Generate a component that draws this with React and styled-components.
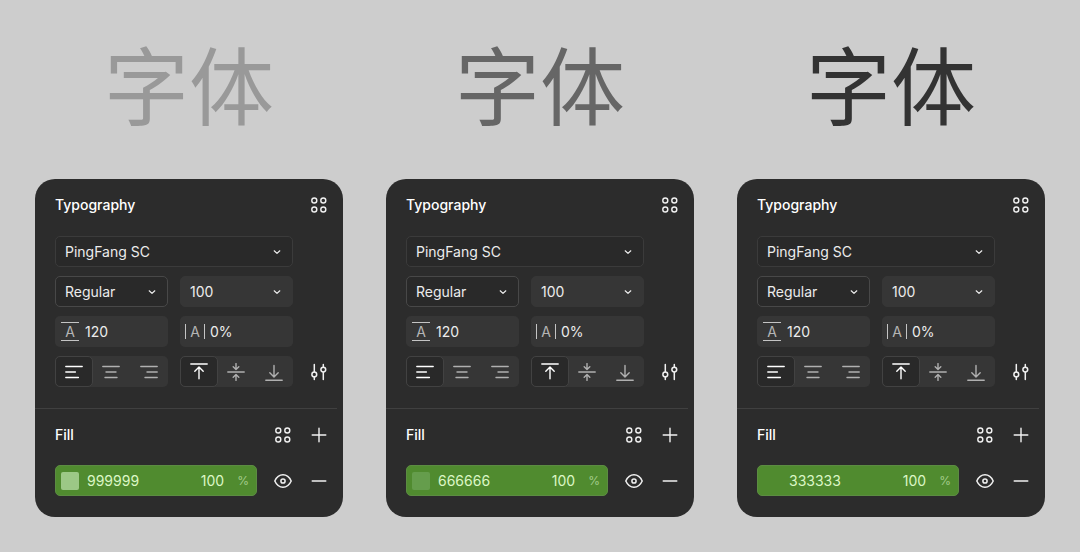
import React, { useId, useState } from 'react';
import styled, { createGlobalStyle } from 'styled-components';

const GlobalStyle = createGlobalStyle`
    * {
        box-sizing: border-box;
    }

    body {
        margin: 0;
        background-color: #cdcdcd;
        font-family: Inter, "Noto Sans CJK SC", sans-serif;
        font-size: 14px;
        color: #f1f1f1;
    }
`;

const Page = styled.main`
    display: grid;
    grid-template-columns: repeat(auto-fit, minmax(300px, 1fr));
    gap: 43px;
    padding: 39px 35px 35px;
`;

const Specimen = styled.h1`
    margin: 0 0 55px;
    font-family: "Noto Sans CJK SC", sans-serif;
    font-size: 85px;
    font-weight: 400;
    line-height: 85px;
    text-align: center;
    color: ${({ $color }) => $color};
`;

const Panel = styled.section`
    background-color: #2c2c2c;
    border-radius: 20px;
`;

const Section = styled.div`
    padding: 0 15px 21px 20px;
`;

const Divider = styled.hr`
    height: 1px;
    margin: 0 6px 0 0;
    border: 0;
    background-color: #404040;
`;

const SectionHeader = styled.header`
    display: flex;
    align-items: center;
    gap: 18px;
    height: 52px;
    margin-bottom: ${({ $gap }) => $gap}px;
`;

const Title = styled.h2`
    flex: 1;
    margin: 0;
    padding-bottom: 2px;
    font-size: 14px;
    font-weight: 500;
    color: #fff;
`;

const IconButton = styled.button`
    display: flex;
    flex: none;
    width: 18px;
    height: 18px;
    padding: 0;
    border: 0;
    background: none;
    color: #f1f1f1;
    cursor: pointer;
`;

const Rows = styled.div`
    display: grid;
    gap: 9px;
`;

const Row = styled.div`
    display: flex;
    align-items: center;
    gap: 17px;
    min-width: 0;
`;

const Actions = styled.div`
    display: flex;
    flex: none;
    gap: 18px;
`;

const Spacer = styled.span`
    flex: none;
    width: 18px;
`;

const Fields = styled.div`
    display: grid;
    flex: 1;
    grid-template-columns: repeat(${({ $single }) => ($single ? 1 : 2)}, minmax(0, 1fr));
    gap: 12px;
    min-width: 0;
`;

const SelectBox = styled.label`
    display: grid;
    grid-template-columns: minmax(0, 1fr) 19px;
    grid-template-rows: 100%;
    align-items: center;
    height: 31px;
    border: 1px solid ${({ $filled, $faint }) => ($filled ? '#363636' : $faint ? '#3b3b3b' : '#484848')};
    border-radius: 5px;
    background-color: ${({ $filled }) => ($filled ? '#363636' : '#292929')};

    svg {
        grid-area: 1 / 2;
        pointer-events: none;
    }
`;

const Select = styled.select`
    grid-area: 1 / 1 / 2 / 3;
    width: 100%;
    height: 100%;
    padding: 0 20px 1px 9px;
    border: 0;
    appearance: none;
    background: none;
    color: #ececec;
    font: inherit;
`;

const Field = styled.label`
    display: flex;
    align-items: center;
    gap: 5px;
    height: 31px;
    padding: 0 5px;
    border-radius: 5px;
    background-color: #363636;
`;

const FieldInput = styled.input`
    flex: 1;
    min-width: 0;
    padding: 0;
    border: 0;
    background: none;
    color: #ececec;
    font: inherit;
`;

const MetricGlyph = styled.span`
    display: flex;
    flex: none;
    align-items: center;
    justify-content: center;
    width: ${({ $vertical }) => ($vertical ? 18 : 20)}px;
    height: ${({ $vertical }) => ($vertical ? 19 : 15)}px;
    margin: 0 ${({ $vertical }) => ($vertical ? 1 : 0)}px;
    border: 0 solid #c4c4c4;
    border-width: ${({ $vertical }) => ($vertical ? '1px 0' : '0 1px')};
    font-size: 14px;
    line-height: 14px;
    color: #b4b4b4;
`;

const Segmented = styled.div`
    display: grid;
    grid-template-columns: repeat(3, 1fr);
    height: 31px;
    border-radius: 5px;
    background-color: #363636;
`;

const Segment = styled.button`
    display: flex;
    align-items: center;
    justify-content: center;
    padding: 0;
    border: 1px solid ${({ $active }) => ($active ? '#424242' : 'transparent')};
    border-radius: 5px;
    background-color: ${({ $active }) => ($active ? '#292929' : 'transparent')};
    color: ${({ $active }) => ($active ? '#fff' : '#b0b0b0')};
    cursor: pointer;
`;

const FillBar = styled.div`
    display: flex;
    flex: 1;
    align-items: center;
    min-width: 0;
    height: 31px;
    padding: 0 7px 0 5px;
    border: 1px solid #5c8c42;
    border-radius: 5px;
    background-color: #508b2f;
`;

const Swatch = styled.span`
    flex: none;
    width: 18px;
    height: 18px;
    margin-right: 8px;
    border-radius: 2px;
    background-color: ${({ $color }) => $color};
`;

const FillInput = styled.input`
    flex: ${({ $fixed }) => ($fixed ? 'none' : 1)};
    width: ${({ $fixed }) => ($fixed ? '32px' : 'auto')};
    min-width: 0;
    padding: 0;
    border: 0;
    background: none;
    color: #dcf7c6;
    font: inherit;
    text-align: ${({ $fixed }) => ($fixed ? 'right' : 'left')};
`;

const Percent = styled.span`
    margin-left: 13px;
    font-size: 12px;
    color: #a3cb8a;
`;

const Icon = ({ size = 18, width = 1.4, children }) => (
    <svg
        width={size}
        height={size}
        viewBox={`0 0 ${size} ${size}`}
        fill="none"
        stroke="currentColor"
        strokeWidth={width}
        strokeLinecap="round"
        strokeLinejoin="round"
        aria-hidden="true"
    >
        {children}
    </svg>
);

const StylesIcon = () => (
    <Icon width={1.4}>
        <circle cx="4.3" cy="4.5" r="2.5" />
        <circle cx="13.3" cy="4.5" r="2.5" />
        <circle cx="4.3" cy="13.5" r="2.5" />
        <circle cx="13.3" cy="13.5" r="2.5" />
    </Icon>
);

const ChevronIcon = () => (
    <Icon size={8} width={1.2}>
        <path d="M1.2 2.8 4 5.4 6.8 2.8" />
    </Icon>
);

const SlidersIcon = () => (
    <Icon width={1.5}>
        <path d="M4.3 1.5v7.2M4.3 14v2.5M13.3 1.5V4M13.3 9.3v7.2" />
        <circle cx="4.3" cy="11.4" r="2.4" />
        <circle cx="13.3" cy="6.6" r="2.4" />
    </Icon>
);

const PlusIcon = () => (
    <Icon>
        <path d="M2.2 9h13.6M9 2.2v13.6" />
    </Icon>
);

const MinusIcon = () => (
    <Icon>
        <path d="M2.2 9h13.6" />
    </Icon>
);

const EyeIcon = () => (
    <Icon width={1.5}>
        <path d="M.8 9C2.6 5 5.5 2.8 9 2.8S15.4 5 17.2 9c-1.8 4-4.7 6.2-8.2 6.2S2.6 13 .8 9z" />
        <circle cx="9" cy="9" r="2.1" />
    </Icon>
);

const horizontal = [
    { label: 'Align left', path: 'M.8 3.5h16.4M.8 9h9.6M.8 14.5h12.6' },
    { label: 'Align center', path: 'M.8 3.5h16.4M4 9h10M3 14.5h12' },
    { label: 'Align right', path: 'M.8 3.5h16.4M7 9h10.2M5 14.5h12.2' },
];

const vertical = [
    { label: 'Align top', path: 'M.8 1h16.4M9 15.8V4.2M4.8 8.2 9 4l4.2 4.2' },
    { label: 'Align middle', path: 'M.8 9h16.4M9 .6v5.6M6.2 3.8 9 6.4l2.8-2.6M9 17.4v-5.6M6.2 14.2 9 11.6l2.8 2.6' },
    { label: 'Align bottom', path: 'M.8 17.2h16.4M9 2.4v11.2M4.8 9.8 9 14l4.2-4.2' },
];

const AlignGroup = ({ label, options }) => {
    const [active, setActive] = useState(0);

    return (
        <Segmented role="group" aria-label={label}>
            {options.map((option, index) => (
                <Segment
                    key={option.label}
                    type="button"
                    aria-label={option.label}
                    aria-pressed={index === active}
                    $active={index === active}
                    onClick={() => setActive(index)}
                >
                    <Icon>
                        <path d={option.path} />
                    </Icon>
                </Segment>
            ))}
        </Segmented>
    );
};

const Dropdown = ({ label, value, filled, faint }) => {
    const id = useId();

    return (
        <SelectBox htmlFor={id} $filled={filled} $faint={faint}>
            <Select id={id} aria-label={label} defaultValue={value}>
                <option>{value}</option>
            </Select>
            <ChevronIcon />
        </SelectBox>
    );
};

const Metric = ({ label, value, tall }) => {
    const id = useId();

    return (
        <Field htmlFor={id}>
            <MetricGlyph $vertical={tall} aria-hidden="true">A</MetricGlyph>
            <FieldInput id={id} aria-label={label} defaultValue={value} />
        </Field>
    );
};

const TypePanel = ({ hex, swatch }) => (
    <Panel>
        <Section>
            <SectionHeader $gap={5}>
                <Title>Typography</Title>
                <IconButton type="button" aria-label="Text styles">
                    <StylesIcon />
                </IconButton>
            </SectionHeader>
            <Rows>
                <Row>
                    <Fields $single>
                        <Dropdown label="Font family" value="PingFang SC" faint />
                    </Fields>
                    <Spacer />
                </Row>
                <Row>
                    <Fields>
                        <Dropdown label="Font weight" value="Regular" />
                        <Dropdown label="Font size" value="100" filled />
                    </Fields>
                    <Spacer />
                </Row>
                <Row>
                    <Fields>
                        <Metric label="Line height" value="120" tall />
                        <Metric label="Letter spacing" value="0%" />
                    </Fields>
                    <Spacer />
                </Row>
                <Row>
                    <Fields>
                        <AlignGroup label="Horizontal alignment" options={horizontal} />
                        <AlignGroup label="Vertical alignment" options={vertical} />
                    </Fields>
                    <IconButton type="button" aria-label="Type settings">
                        <SlidersIcon />
                    </IconButton>
                </Row>
            </Rows>
        </Section>
        <Divider />
        <Section>
            <SectionHeader $gap={4}>
                <Title>Fill</Title>
                <IconButton type="button" aria-label="Color styles">
                    <StylesIcon />
                </IconButton>
                <IconButton type="button" aria-label="Add fill">
                    <PlusIcon />
                </IconButton>
            </SectionHeader>
            <Row>
                <FillBar>
                    <Swatch $color={swatch} />
                    <FillInput aria-label="Fill color" defaultValue={hex} />
                    <FillInput aria-label="Fill opacity" defaultValue="100" $fixed />
                    <Percent>%</Percent>
                </FillBar>
                <Actions>
                    <IconButton type="button" aria-label="Toggle visibility">
                        <EyeIcon />
                    </IconButton>
                    <IconButton type="button" aria-label="Remove fill">
                        <MinusIcon />
                    </IconButton>
                </Actions>
            </Row>
        </Section>
    </Panel>
);

const samples = [
    { hex: '999999', swatch: '#9cc886' },
    { hex: '666666', swatch: '#659d4c' },
    { hex: '333333', swatch: 'transparent' },
];

const App = () => (
    <>
        <GlobalStyle />
        <Page>
            {samples.map(({ hex, swatch }) => (
                <article key={hex}>
                    <Specimen lang="zh-CN" $color={`#${hex}`}>字体</Specimen>
                    <TypePanel hex={hex} swatch={swatch} />
                </article>
            ))}
        </Page>
    </>
);

export default App;
